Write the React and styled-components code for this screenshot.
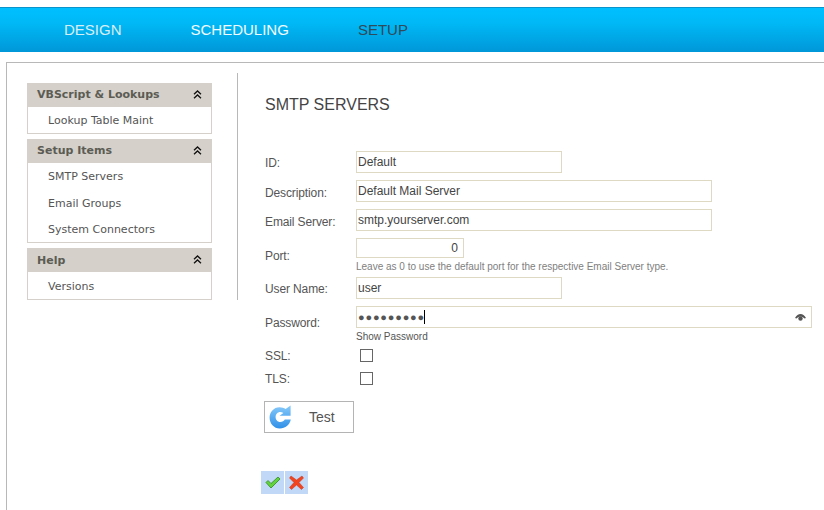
import React from "react";
import styled, { createGlobalStyle } from "styled-components";

const menus = [
  { title: "VBScript & Lookups", items: ["Lookup Table Maint"] },
  { title: "Setup Items", items: ["SMTP Servers", "Email Groups", "System Connectors"] },
  { title: "Help", items: ["Versions"] },
];

const DoubleUp = () => (
  <ChevronSvg width="9" height="9" viewBox="0 0 9 9" fill="none" stroke="#111" strokeWidth="1.3">
    <path d="M1 4.2 4.5 1 8 4.2" />
    <path d="M1 8.2 4.5 5 8 8.2" />
  </ChevronSvg>
);

const EyeIcon = () => (
  <svg width="11" height="7" viewBox="0 0 11 7">
    <path d="M0 4C1.5 1.4 3.4 0 5.5 0S9.5 1.4 11 4L9.5 4.6C8.4 3.4 7 2.8 5.5 2.8S2.6 3.4 1.5 4.6Z" fill="#555" />
    <circle cx="5.5" cy="4.6" r="2.2" fill="#555" />
  </svg>
);

const RefreshIcon = () => (
  <svg width="23" height="24" viewBox="0 0 23 24">
    <defs>
      <linearGradient id="refreshFill" x1="0" y1="0" x2="0" y2="1">
        <stop offset="0" stopColor="#86c9fa" />
        <stop offset="1" stopColor="#2f8fe8" />
      </linearGradient>
    </defs>
    <path
      d="M10.5 2.2C13 2.2 15 2.9 16.6 4.1L21.6 0.6V10.8H10.6L14.4 8C13.4 7.3 12.3 7 11.2 7 8.6 7 6.6 9.2 6.6 12S8.6 17 11.2 17C13.4 17 15 16 15.8 14.6H21.8C20.6 20 16.4 23.6 10.8 23.6 4.9 23.6 0.6 18.4 0.6 12.8S4.6 2.2 10.5 2.2Z"
      fill="url(#refreshFill)"
    />
  </svg>
);

const CheckIcon = () => (
  <svg width="16" height="13" viewBox="0 0 16 13">
    <path d="M1 6.5 3 4.5 6 7.5 13 1 15 3 6 12Z" fill="#63d43c" stroke="#2f8a1e" strokeWidth="0.8" />
  </svg>
);

const CrossIcon = () => (
  <svg width="15" height="15" viewBox="0 0 15 15">
    <path d="M2 1 7.5 5 13 1 14.5 3 10 7.5 14.5 12.5 12.5 14.5 7.5 10 2.5 14.5 0.5 12.5 5 7.5 0.5 3Z" fill="#f0451f" stroke="#c9351a" strokeWidth="0.5" />
  </svg>
);

const App = () => {
  return (
    <>
      <GlobalStyles />
      <NavBar>
        <NavItem $color="#d8eef5">DESIGN</NavItem>
        <NavItem $color="#f2fbff">SCHEDULING</NavItem>
        <NavItem $color="#2f4a58">SETUP</NavItem>
      </NavBar>
      <Panel>
        <Sidebar>
          {menus.map((menu) => (
            <Menu key={menu.title}>
              <MenuHeader>
                <MenuTitle>{menu.title}</MenuTitle>
                <DoubleUp />
              </MenuHeader>
              <MenuBody>
                {menu.items.map((item) => (
                  <MenuItem key={item}>{item}</MenuItem>
                ))}
              </MenuBody>
            </Menu>
          ))}
        </Sidebar>
        <Divider />
        <Content>
          <Title>SMTP SERVERS</Title>
          <Form>
            <Row>
              <Label $top={5}>ID:</Label>
              <Field $width={206}>Default</Field>
            </Row>
            <Row>
              <Label>Description:</Label>
              <Field $width={356}>Default Mail Server</Field>
            </Row>
            <Row>
              <Label>Email Server:</Label>
              <Field $width={356}>smtp.yourserver.com</Field>
            </Row>
            <Row>
              <Label $top={11}>Port:</Label>
              <div>
                <Field $width={108} $height={20} $right>0</Field>
                <Hint>Leave as 0 to use the default port for the respective Email Server type.</Hint>
              </div>
            </Row>
            <Row>
              <Label $top={5}>User Name:</Label>
              <Field $width={206}>user</Field>
            </Row>
            <Row>
              <Label $top={10}>Password:</Label>
              <div>
                <Field $width={456}>
                  <Dots>●●●●●●●●●</Dots>
                  <Caret />
                  <EyeSlot>
                    <EyeIcon />
                  </EyeSlot>
                </Field>
                <Hint $dark>Show Password</Hint>
              </div>
            </Row>
            <CheckRow>
              <Label $top={2}>SSL:</Label>
              <CheckBox />
            </CheckRow>
            <CheckRow>
              <Label $top={2}>TLS:</Label>
              <CheckBox />
            </CheckRow>
          </Form>
          <TestButton>
            <RefreshIcon />
            <span>Test</span>
          </TestButton>
          <Actions>
            <ActionButton>
              <CheckIcon />
            </ActionButton>
            <ActionButton>
              <CrossIcon />
            </ActionButton>
          </Actions>
        </Content>
      </Panel>
    </>
  );
};

const GlobalStyles = createGlobalStyle`
  html, body {
    margin: 0;
    height: 510px;
    overflow: hidden;
    background: #fff;
    font-family: "Liberation Sans", Arial, sans-serif;
  }
  #root {
    padding-top: 7px;
  }
`;

const ChevronSvg = styled.svg`
  margin-bottom: 1px;
`;

const NavBar = styled.nav`
  display: flex;
  gap: 69px;
  height: 44px;
  padding-left: 64px;
  align-items: center;
  border-top: 1px solid #0a94cc;
  background: linear-gradient(#00c0ff 0%, #00b8f5 35%, #0097d8 100%);
`;

const NavItem = styled.a`
  font-size: 15px;
  padding-bottom: 2px;
  color: ${(p) => p.$color};
`;

const Panel = styled.main`
  display: flex;
  margin: 10px 0 0 6px;
  height: 448px;
  padding: 10px 0 0 20px;
  border-top: 1px solid #b8b8b8;
  border-left: 1px solid #b8b8b8;
`;

const Sidebar = styled.aside`
  display: flex;
  flex-direction: column;
  gap: 5px;
  width: 185px;
  margin-top: 10px;
  font-family: "DejaVu Sans", Verdana, sans-serif;
`;

const Menu = styled.section`
  display: flex;
  flex-direction: column;
`;

const MenuHeader = styled.h3`
  display: flex;
  justify-content: space-between;
  align-items: center;
  height: 24px;
  margin: 0;
  padding: 0 10px;
  background: #d5d0c9;
  color: #5c5c54;
  font-size: 11px;
  font-weight: bold;
`;

const MenuTitle = styled.span`
  padding-bottom: 2px;

  ${Menu}:last-child & {
    padding-bottom: 0;
  }
`;

const MenuBody = styled.ul`
  margin: 0;
  padding: 0;
  list-style: none;
  background: #fff;
  border: 1px solid #d5d0c9;
  border-top: none;
`;

const MenuItem = styled.li`
  height: 26px;
  line-height: 28px;
  padding-left: 20px;
  font-size: 11px;
  color: #555;

  &:nth-child(2) {
    height: 27px;
    line-height: 29px;
  }

  ${Menu}:last-child & {
    height: 27px;
    line-height: 29px;
  }
`;

const Divider = styled.div`
  width: 1px;
  height: 227px;
  margin-left: 25px;
  background: #b8b8b8;
`;

const Content = styled.div`
  display: flex;
  flex-direction: column;
  align-items: flex-start;
  padding-left: 27px;
`;

const Title = styled.h1`
  margin: 23px 0 0;
  font-size: 16px;
  line-height: 18px;
  font-weight: normal;
  color: #444;
`;

const Form = styled.form`
  display: flex;
  flex-direction: column;
  gap: 7px;
  margin-top: 37px;
`;

const Row = styled.div`
  display: flex;
  align-items: flex-start;
`;

const CheckRow = styled(Row)`
  align-items: center;
  height: 16px;
`;

const Label = styled.label`
  width: 91px;
  padding-top: ${(p) => p.$top ?? 6}px;
  font-size: 12px;
  line-height: 15px;
  letter-spacing: -0.12px;
  color: #555;
`;

const Field = styled.div`
  position: relative;
  display: flex;
  align-items: center;
  justify-content: ${(p) => (p.$right ? "flex-end" : "flex-start")};
  box-sizing: border-box;
  width: ${(p) => p.$width}px;
  height: ${(p) => p.$height || 22}px;
  padding: 0 ${(p) => (p.$right ? 5 : 1)}px;
  border: 1px solid #ddd9c3;
  font-size: 12px;
  color: #444;
`;

const Dots = styled.span`
  font-size: 11px;
  letter-spacing: 0.8px;
  color: #555;
`;

const Caret = styled.i`
  width: 1px;
  height: 14px;
  margin-left: -1px;
  background: #000;
`;

const EyeSlot = styled.span`
  display: flex;
  margin-left: auto;
  margin-right: 4px;
`;

const Hint = styled.p`
  margin: 4px 0 -2px;
  font-size: 10px;
  line-height: 10px;
  color: ${(p) => (p.$dark ? "#555" : "#808080")};
`;

const CheckBox = styled.span`
  box-sizing: border-box;
  width: 13px;
  height: 13px;
  margin-left: 4px;
  border: 1px solid #666;
  background: #fff;
`;

const TestButton = styled.button`
  display: flex;
  align-items: center;
  box-sizing: border-box;
  width: 90px;
  height: 32px;
  margin: 15px 0 0 -1px;
  padding: 0 4px;
  border: 1px solid #b4b4b4;
  background: #fff;
  font-family: inherit;
  font-size: 14px;
  color: #555;

  span {
    margin-left: 17px;
  }
`;

const Actions = styled.div`
  display: flex;
  gap: 1px;
  margin: 38px 0 0 -4px;
`;

const ActionButton = styled.button`
  display: flex;
  align-items: center;
  justify-content: center;
  width: 23px;
  height: 23px;
  padding: 0;
  border: none;
  background: #c1d8f7;
`;

export default App;
